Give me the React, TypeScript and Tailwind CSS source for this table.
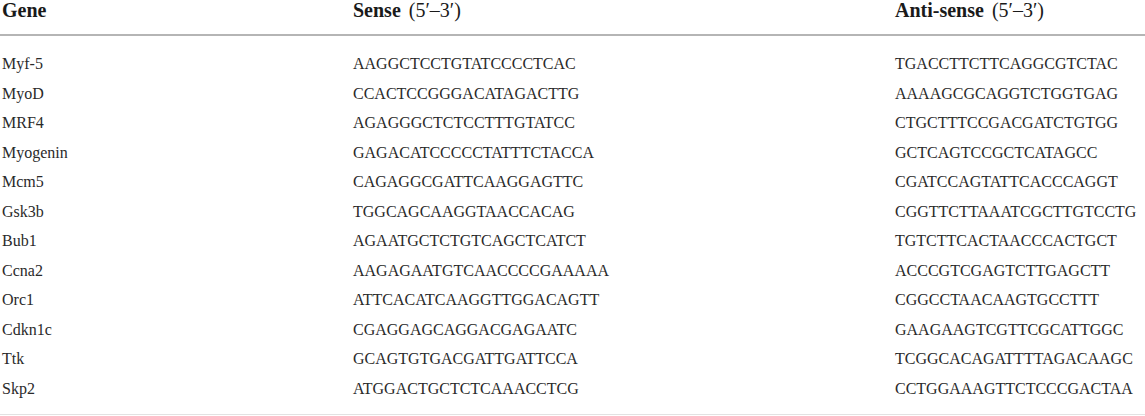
const rows: [string, string, string][] = [
  ['Myf-5', 'AAGGCTCCTGTATCCCCTCAC', 'TGACCTTCTTCAGGCGTCTAC'],
  ['MyoD', 'CCACTCCGGGACATAGACTTG', 'AAAAGCGCAGGTCTGGTGAG'],
  ['MRF4', 'AGAGGGCTCTCCTTTGTATCC', 'CTGCTTTCCGACGATCTGTGG'],
  ['Myogenin', 'GAGACATCCCCCTATTTCTACCA', 'GCTCAGTCCGCTCATAGCC'],
  ['Mcm5', 'CAGAGGCGATTCAAGGAGTTC', 'CGATCCAGTATTCACCCAGGT'],
  ['Gsk3b', 'TGGCAGCAAGGTAACCACAG', 'CGGTTCTTAAATCGCTTGTCCTG'],
  ['Bub1', 'AGAATGCTCTGTCAGCTCATCT', 'TGTCTTCACTAACCCACTGCT'],
  ['Ccna2', 'AAGAGAATGTCAACCCCGAAAAA', 'ACCCGTCGAGTCTTGAGCTT'],
  ['Orc1', 'ATTCACATCAAGGTTGGACAGTT', 'CGGCCTAACAAGTGCCTTT'],
  ['Cdkn1c', 'CGAGGAGCAGGACGAGAATC', 'GAAGAAGTCGTTCGCATTGGC'],
  ['Ttk', 'GCAGTGTGACGATTGATTCCA', 'TCGGCACAGATTTTAGACAAGC'],
  ['Skp2', 'ATGGACTGCTCTCAAACCTCG', 'CCTGGAAAGTTCTCCCGACTAA'],
];

const cols = 'grid grid-cols-[351px_542px_1fr] pl-[2px]';

export default function App() {
  return (
    <div className="w-[1145px] h-[416px] bg-white font-['Liberation_Serif',serif]">
      <div className={`${cols} h-[36px] border-b-2 border-[#b5b5b5] text-[20px] leading-[20px] font-bold text-[#1a1a1a]`}>
        <div>Gene</div>
        <div>
          Sense <span className="ml-[3px] font-normal">(5′–3′)</span>
        </div>
        <div>
          Anti-sense <span className="ml-[3px] font-normal">(5′–3′)</span>
        </div>
      </div>
      <div className="pt-[13px] pb-[11px] border-b border-[#e2e2e2] text-[16px] leading-[29.5px] text-[#2a2a2a]">
        {rows.map(([gene, sense, anti]) => (
          <div key={gene} className={cols}>
            <div>{gene}</div>
            <div>{sense}</div>
            <div>{anti}</div>
          </div>
        ))}
      </div>
    </div>
  );
}
